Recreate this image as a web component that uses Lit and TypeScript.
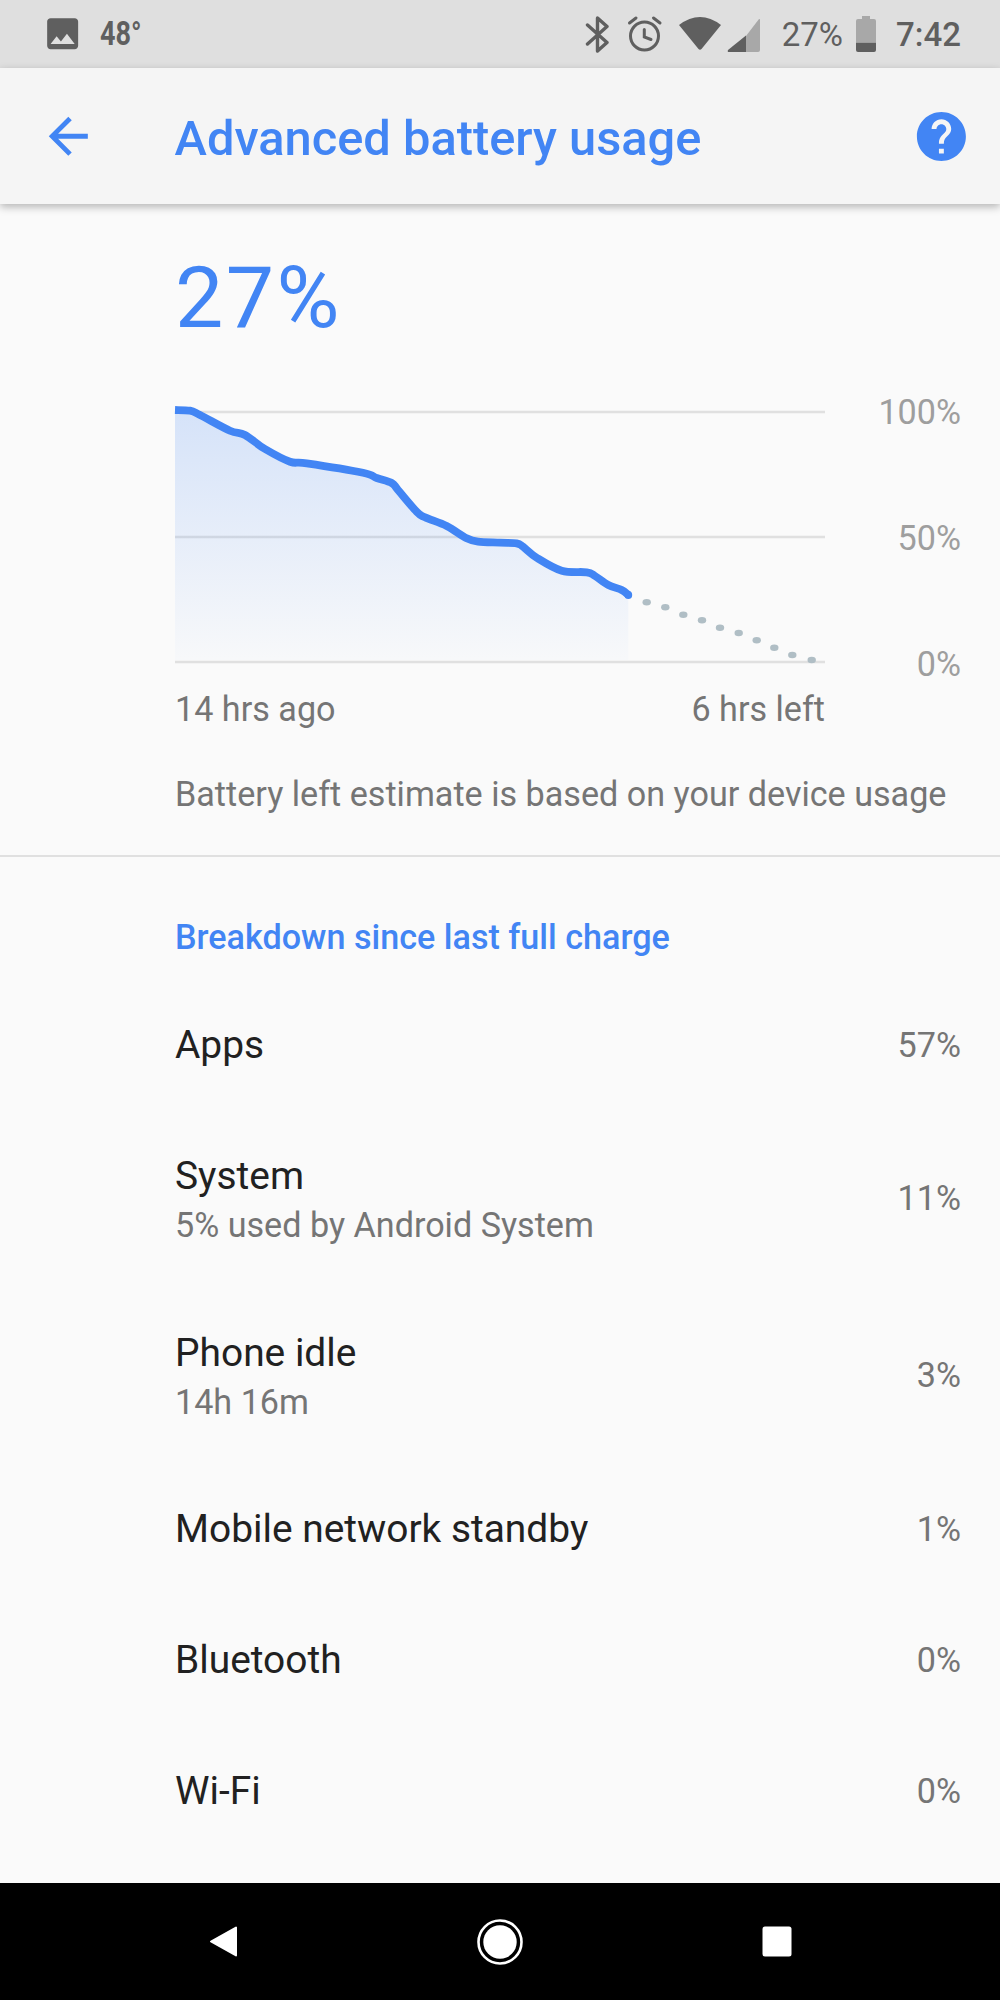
import { LitElement, html, css, svg } from "lit";
import { customElement } from "lit/decorators.js";

const LINE: [number, number][] = [
  [175, 410], [190, 410.7], [200, 415], [230, 430.7], [245, 435], [265, 449], [290, 461.7],
  [306.7, 463.3], [363, 472.7], [376.7, 478], [391.7, 483], [398, 490], [416.7, 511.7],
  [425, 517.3], [446.7, 526], [466.7, 538.3], [478, 541.7], [500, 542.7], [516.7, 543.3],
  [523, 546.7], [536.7, 557.7], [561.7, 570.7], [586.7, 572.3], [595, 576], [608.3, 585],
  [621.7, 590], [628.3, 595],
];

const DOTS: [number, number][] = [
  [646.7, 602.3], [665.3, 607.3], [683.3, 614.7], [702, 620.3], [720, 627.7],
  [738.7, 633], [756.7, 640.3], [774.3, 647.7], [792.3, 655], [811.7, 660],
];

function smooth(p: [number, number][]): string {
  let d = `M${p[0][0]} ${p[0][1]}`;
  for (let i = 0; i < p.length - 1; i++) {
    const a = p[Math.max(i - 1, 0)], b = p[i], c = p[i + 1], e = p[Math.min(i + 2, p.length - 1)];
    const k = 6;
    d += ` C${(b[0] + (c[0] - a[0]) / k).toFixed(1)} ${(b[1] + (c[1] - a[1]) / k).toFixed(1)} ${(c[0] - (e[0] - b[0]) / k).toFixed(1)} ${(c[1] - (e[1] - b[1]) / k).toFixed(1)} ${c[0]} ${c[1]}`;
  }
  return d;
}

interface Row { title: string; sub?: string; value: string; }
const ROWS: Row[] = [
  { title: "Apps", value: "57%" },
  { title: "System", sub: "5% used by Android System", value: "11%" },
  { title: "Phone idle", sub: "14h 16m", value: "3%" },
  { title: "Mobile network standby", value: "1%" },
  { title: "Bluetooth", value: "0%" },
  { title: "Wi-Fi", value: "0%" },
];

@customElement("app-root")
export class AppRoot extends LitElement {
  static styles = css`
    :host { display: block; width: 1000px; height: 2000px; font-family: Roboto, sans-serif; background: #fafafa; position: relative; overflow: hidden; }
    .page { display: flex; flex-direction: column; height: 2000px; }
    .status { height: 68px; flex: none; background: #dfdfdf; display: flex; align-items: center; justify-content: space-between; padding: 0 39px 0 42px; color: #5f5f5f; }
    .status svg { display: block; flex: none; }
    .cluster { display: flex; align-items: center; }
    .temp { font-size: 33px; font-weight: 700; margin-left: 17px; transform: scaleX(0.82); transform-origin: left center; }
    .sb-pct { font-size: 33px; margin-left: 21px; }
    .sb-time { font-size: 33px; font-weight: 500; margin-left: 20px; }
    .m18 { margin-left: 18px; }
    .m15 { margin-left: 15px; }
    .m5 { margin-left: 5px; }
    .m13 { margin-left: 13px; }
    .toolbar { height: 136px; flex: none; background: #f5f5f5; display: flex; align-items: center; padding: 0 29px 0 39px; box-shadow: 0 3px 8px rgba(0,0,0,.28); position: relative; z-index: 1; }
    .toolbar svg { display: block; flex: none; }
    .title { flex: 1; margin-left: 77px; padding-top: 4px; color: #4285f4; font-size: 48.8px; font-weight: 500; }
    .level { color: #4285f4; font-size: 86px; line-height: 100px; letter-spacing: 2.4px; padding: 44px 0 44px 175px; }
    .chart { display: flex; height: 292px; padding-left: 170px; }
    .chart svg { display: block; flex: none; }
    .axis { flex: 1; display: flex; flex-direction: column; justify-content: space-between; align-items: flex-end; padding-right: 39px; color: #9e9e9e; font-size: 34.15px; line-height: 40px; }
    .times { display: flex; justify-content: space-between; width: 650px; margin: 1px 0 0 175px; color: #757575; font-size: 34.15px; line-height: 48px; }
    .note { margin: 37px 0 37px 175px; color: #757575; font-size: 34.15px; line-height: 48px; }
    .divider { height: 2px; flex: none; background: #e0e0e0; }
    .heading { padding: 56px 0 19px 175px; color: #4285f4; font-size: 34.15px; font-weight: 500; line-height: 48px; }
    .rows { flex: 1; }
    .row { min-height: 131px; display: flex; align-items: center; justify-content: space-between; padding: 0 39px 0 175px; }
    .row:first-child { min-height: 130px; }
    .row.two { min-height: 176.5px; }
    .two .texts { padding-top: 5px; }
    .row-title { color: #212121; font-size: 38.9px; line-height: 48px; }
    .row-sub { color: #757575; font-size: 34.15px; line-height: 48px; margin-top: 1px; }
    .row-value { color: #757575; font-size: 34.15px; }
    .nav { height: 117px; flex: none; background: #000; display: flex; align-items: center; justify-content: space-between; padding: 0 208px 0 208px; }
    .nav svg { display: block; flex: none; }
  `;

  private chart() {
    const d = smooth(LINE);
    return html`<svg width="660" height="290" viewBox="170 392 660 290">
      <defs>
        <linearGradient id="fill" x1="0" y1="0" x2="0" y2="1">
          <stop offset="0" stop-color="#4285f4" stop-opacity=".2"></stop>
          <stop offset="1" stop-color="#4285f4" stop-opacity=".015"></stop>
        </linearGradient>
      </defs>
      ${[412, 537, 662].map((y) => svg`<line x1="175" x2="825" y1=${y} y2=${y} stroke="#e0e0e0" stroke-width="2.4"></line>`)}
      <path d="${d} L628.3 660 L175 660 Z" fill="url(#fill)"></path>
      <path d=${d} fill="none" stroke="#4285f4" stroke-width="7.8" stroke-linejoin="round"></path>
      <circle cx="628.3" cy="595" r="3.9" fill="#4285f4"></circle>
      ${DOTS.map(([x, y]) => svg`<ellipse cx=${x} cy=${y} rx="4.2" ry="3.3" fill="#b0bec5"></ellipse>`)}
    </svg>`;
  }

  render() {
    return html`<div class="page">
      <div class="status">
        <div class="cluster">
          <svg width="41.3" height="41.3" viewBox="0 0 24 24"><path fill="#5f5f5f" d="M21 19V5c0-1.1-.9-2-2-2H5c-1.1 0-2 .9-2 2v14c0 1.1.9 2 2 2h14c1.1 0 2-.9 2-2zM8.5 13.5l2.5 3.01L14.5 12l4.5 6H5l3.5-4.5z"></path></svg>
          <span class="temp">48°</span>
        </div>
        <div class="cluster">
          <svg width="24" height="68" viewBox="583 0 24 68"><path d="M585.5 25 L605 42.5 L595.5 51 V18 L605 26.5 L585.5 44" fill="none" stroke="#5f5f5f" stroke-width="3.4" stroke-linejoin="round" stroke-linecap="round"></path></svg>
          <svg class="m18" width="36" height="68" viewBox="626 0 36 68"><g fill="none" stroke="#5f5f5f" stroke-width="3" stroke-linecap="round"><circle cx="643.5" cy="36" r="14"></circle><path d="M643.3 29.5 V37 L650 39.5 M628.5 23 L635 18 M652.5 18 L659 23"></path></g></svg>
          <svg class="m15" width="44" height="68" viewBox="677 0 44 68"><path fill="#5f5f5f" d="M678 25 Q699 9 720 25 L700.5 49 Q699 50.5 697.5 49 Z"></path></svg>
          <svg class="m5" width="34" height="68" viewBox="726 0 34 68"><path fill="#a8a8a8" d="M745 36 L758 19 Q759 18.5 759 20 V50 Q759 52 757 52 H745 Z"></path><path fill="#5f5f5f" d="M745 35.5 V52 H728 Q726 52 727 50 Z"></path></svg>
          <span class="sb-pct">27%</span>
          <svg class="m13" width="20" height="68" viewBox="855 0 20 68"><path fill="#a8a8a8" d="M861 16 H869 V19 H873 Q875 19 875 21 V42 H855 V21 Q855 19 857 19 H861 Z"></path><path fill="#5f5f5f" d="M855 42.5 H875 V50 Q875 52 873 52 H857 Q855 52 855 50 Z"></path></svg>
          <span class="sb-time">7:42</span>
        </div>
      </div>
      <div class="toolbar">
        <svg width="58.6" height="58.6" viewBox="0 0 24 24"><path fill="#4285f4" d="M20 11H7.83l5.59-5.59L12 4l-8 8 8 8 1.41-1.41L7.83 13H20v-2z"></path></svg>
        <div class="title">Advanced battery usage</div>
        <svg width="58.8" height="58.8" viewBox="0 0 24 24"><path fill="#4285f4" d="M12 2C6.48 2 2 6.48 2 12s4.48 10 10 10 10-4.48 10-10S17.52 2 12 2zm1 17h-2v-2h2v2zm2.07-7.75l-.9.92C13.45 12.9 13 13.5 13 15h-2v-.5c0-1.1.45-2.1 1.17-2.83l1.24-1.26c.37-.36.59-.86.59-1.41 0-1.1-.9-2-2-2s-2 .9-2 2H8c0-2.21 1.79-4 4-4s4 1.79 4 4c0 .88-.36 1.68-.93 2.25z"></path></svg>
      </div>
      <div class="level">27%</div>
      <div class="chart">
        ${this.chart()}
        <div class="axis"><span>100%</span><span>50%</span><span>0%</span></div>
      </div>
      <div class="times"><span>14 hrs ago</span><span>6 hrs left</span></div>
      <div class="note">Battery left estimate is based on your device usage</div>
      <div class="divider"></div>
      <div class="heading">Breakdown since last full charge</div>
      <div class="rows">
        ${ROWS.map((r) => html`<div class="row ${r.sub ? "two" : ""}">
          <div class="texts">
            <div class="row-title">${r.title}</div>
            ${r.sub ? html`<div class="row-sub">${r.sub}</div>` : ""}
          </div>
          <div class="row-value">${r.value}</div>
        </div>`)}
      </div>
      <div class="nav">
        <svg width="30" height="33" viewBox="208 1925 30 33"><path fill="#fff" stroke="#fff" stroke-width="2" stroke-linejoin="round" d="M236 1927.5 V1955.5 L211 1941.5 Z"></path></svg>
        <svg width="46" height="46" viewBox="477 1918 46 46"><circle cx="500" cy="1941" r="21.5" fill="none" stroke="#fff" stroke-width="2.6"></circle><circle cx="500" cy="1941" r="16.7" fill="#fff"></circle></svg>
        <svg width="30" height="31" viewBox="761.5 1926.5 30 31"><rect x="762" y="1927" width="29" height="30" rx="2.5" fill="#fff"></rect></svg>
      </div>
    </div>`;
  }
}
